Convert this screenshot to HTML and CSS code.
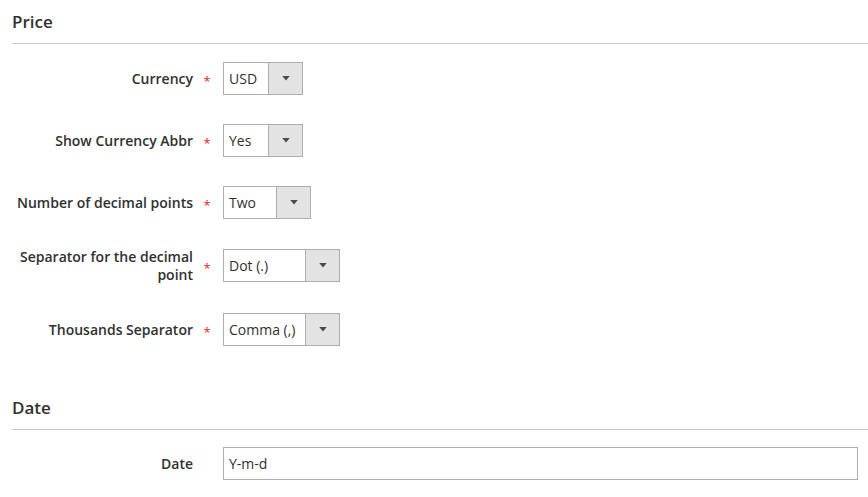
FILE: index.html
```html
<!DOCTYPE html>
<html>
<head>
<meta charset="utf-8">
<link rel="stylesheet" href="styles.css">
</head>
<body>
<section class="group">
  <h2 class="group-title">Price</h2>
  <div class="fields">
    <div class="field">
      <label class="field-label">Currency</label>
      <span class="req">*</span>
      <div class="select w80"><span class="select-value">USD</span><span class="select-btn"><svg width="9" height="6" viewBox="0 0 9 6"><path d="M0 0H9L4.5 5.5Z" fill="#514943"/></svg></span></div>
    </div>
    <div class="field">
      <label class="field-label">Show Currency Abbr</label>
      <span class="req">*</span>
      <div class="select w80"><span class="select-value">Yes</span><span class="select-btn"><svg width="9" height="6" viewBox="0 0 9 6"><path d="M0 0H9L4.5 5.5Z" fill="#514943"/></svg></span></div>
    </div>
    <div class="field">
      <label class="field-label">Number of decimal points</label>
      <span class="req">*</span>
      <div class="select w88"><span class="select-value">Two</span><span class="select-btn"><svg width="9" height="6" viewBox="0 0 9 6"><path d="M0 0H9L4.5 5.5Z" fill="#514943"/></svg></span></div>
    </div>
    <div class="field field-tall">
      <label class="field-label">Separator for the decimal point</label>
      <span class="req">*</span>
      <div class="select w117"><span class="select-value">Dot (.)</span><span class="select-btn"><svg width="9" height="6" viewBox="0 0 9 6"><path d="M0 0H9L4.5 5.5Z" fill="#514943"/></svg></span></div>
    </div>
    <div class="field">
      <label class="field-label">Thousands Separator</label>
      <span class="req">*</span>
      <div class="select w117"><span class="select-value">Comma (,)</span><span class="select-btn"><svg width="9" height="6" viewBox="0 0 9 6"><path d="M0 0H9L4.5 5.5Z" fill="#514943"/></svg></span></div>
    </div>
  </div>
</section>
<section class="group group-date">
  <h2 class="group-title">Date</h2>
  <div class="fields fields-date">
    <div class="field">
      <label class="field-label">Date</label>
      <span class="req-empty"></span>
      <div class="text-input">Y-m-d</div>
    </div>
  </div>
</section>
</body>
</html>
```

FILE: styles.css
```css
html, body {
  margin: 0;
  padding: 0;
  background: #ffffff;
}
body {
  font-family: "Open Sans", "Liberation Sans", sans-serif;
  color: #303030;
  padding-left: 12px;
}
.group-title {
  margin: 0;
  padding: 10px 0 10px 0;
  font-size: 17px;
  line-height: 23px;
  font-weight: 600;
  color: #303030;
  border-bottom: 1px solid #cdc9c1;
}
.fields {
  display: flex;
  flex-direction: column;
  gap: 29px;
  padding-top: 18px;
}
.fields-date {
  padding-top: 17px;
}
.group-date {
  margin-top: 40px;
}
.field {
  display: flex;
  align-items: center;
}
.field-tall {
  align-items: flex-start;
}
.field-tall .select {
  margin-top: 1px;
}
.field-tall .req {
  align-self: center;
}
.field-label {
  width: 181px;
  text-align: right;
  font-size: 14px;
  line-height: 18px;
  font-weight: 600;
  color: #303030;
}
.req, .req-empty {
  width: 30px;
  text-align: center;
  color: #e22626;
  font-size: 13px;
  padding-left: 0;
  padding-top: 4px;
  box-sizing: border-box;
}
.req {
  padding-right: 2px;
}
.select {
  display: flex;
  height: 33px;
  box-sizing: border-box;
  border: 1px solid #adadad;
  background: #fff;
}
.w80 { width: 80px; }
.w88 { width: 88px; }
.w117 { width: 117px; }
.select-value {
  flex: 1;
  padding-left: 5px;
  font-size: 14px;
  line-height: 31px;
  color: #303030;
}
.select-btn {
  width: 33px;
  border-left: 1px solid #adadad;
  background: #e3e3e3;
  display: flex;
  align-items: center;
  justify-content: center;
}
.select-btn svg {
  display: block;
  width: 8px;
  height: 5px;
}
.text-input {
  width: 635px;
  height: 33px;
  box-sizing: border-box;
  border: 1px solid #adadad;
  padding-left: 5px;
  font-size: 14px;
  line-height: 31px;
  color: #303030;
}
```
